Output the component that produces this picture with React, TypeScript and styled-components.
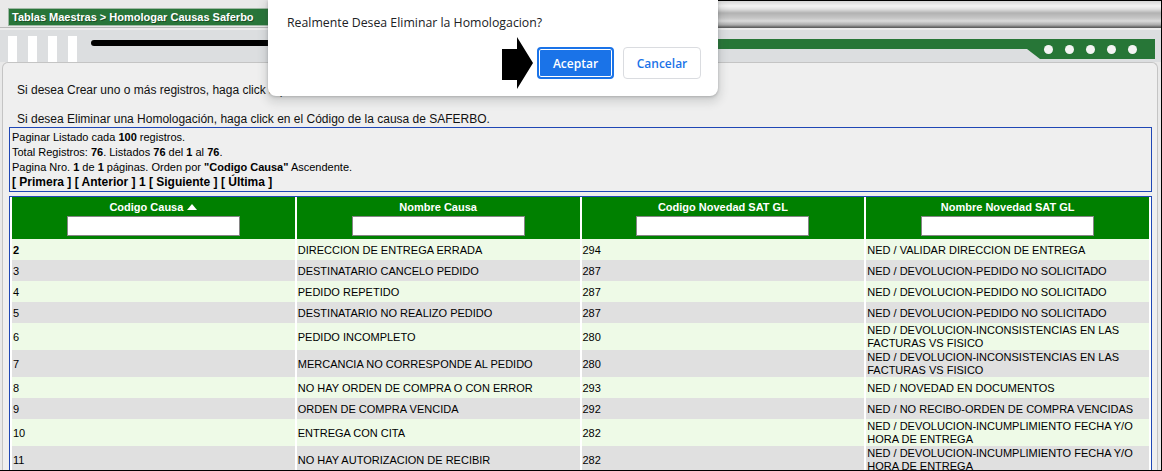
import React from "react";
import styled, { createGlobalStyle } from "styled-components";

const Global = createGlobalStyle`
  html, body { margin: 0; padding: 0; background: #fff; }
  body { font-family: "Liberation Sans", Arial, sans-serif; }
  * { box-sizing: border-box; }
`;

const Frame = styled.div`
  position: relative;
  width: 1162px;
  height: 471px;
  overflow: hidden;
  background: #e9e9e9;
  border-right: 1px solid #000;
  border-bottom: 1px solid #000;
  display: flex;
  flex-direction: column;
`;

const TopRow = styled.div`
  display: flex;
  height: 28px;
  flex: none;
`;

const LeftCap = styled.div`
  width: 268px;
  background: #e9e9e9;
  padding: 8px 0 0 8px;
  border-bottom: 1px solid #b8b8b8;
`;

const Crumb = styled.div`
  height: 18px;
  background: #287539;
  border: 1px solid #9fb8a4;
  border-right: none;
  color: #fff;
  font-weight: bold;
  font-size: 11px;
  line-height: 16px;
  padding-left: 3px;
  text-shadow: 1px 1px 0 rgba(0, 0, 0, 0.35);
  white-space: nowrap;
`;

const Metal = styled.div`
  flex: 1;
  background: linear-gradient(
    to bottom,
    #000 0px,
    #000 1px,
    #d6d6d6 1px,
    #f4f4f4 6px,
    #e2e2e2 9px,
    #b2b2b2 13px,
    #c6c6c6 18px,
    #dadada 21px,
    #a9a9a9 25px,
    #6a6a6a 27px,
    #555 28px
  );
`;

const DecoRow = styled.div`
  display: flex;
  height: 34px;
  flex: none;
  background: #dcdee0;
  border-top: 2px solid #ececec;
  align-items: flex-start;
`;

const Bars = styled.div`
  display: flex;
  gap: 11px;
  padding-left: 8px;
  align-self: stretch;
  align-items: flex-end;
`;

const Bar = styled.div`
  width: 9px;
  height: 26px;
  background: #fff;
`;

const BlackLine = styled.div`
  width: 340px;
  height: 6px;
  margin: 10px 0 0 14px;
  border-radius: 3px;
  background: #000;
`;

const Track = styled.div`
  flex: 1;
  display: flex;
  align-items: flex-start;
  margin: 9px 6px 0 0;
`;

const Band = styled.div`
  flex: 1;
  height: 10px;
  background: #277637;
`;

const Tab = styled.div`
  width: 128px;
  height: 20px;
  background: #277637;
  clip-path: polygon(0 0, 100% 0, 100% 100%, 13px 100%, 0 10px);
  display: flex;
  justify-content: flex-end;
  gap: 12px;
  padding: 6px 18px 0 0;
`;

const Dot = styled.div`
  width: 9px;
  height: 9px;
  border-radius: 50%;
  background: #f4f4f4;
`;

const Panel = styled.div`
  flex: 1;
  margin: 0 3px 0 2px;
  background: #efefef;
  border: 1px solid #c4c4c4;
  border-bottom: none;
  border-radius: 6px 6px 0 0;
  padding: 20px 5px 0 6px;
  display: flex;
  flex-direction: column;
  min-height: 0;
`;

const Intro = styled.p<{ $gap: number }>`
  margin: ${(p) => p.$gap}px 0 0 0;
  padding-left: 8px;
  font-size: 12px;
  line-height: 14px;
  color: #111;
  white-space: nowrap;
`;

const InfoBox = styled.div`
  margin-top: 1px;
  border: 1px solid #1f47b5;
  padding: 2px 2px 1px 2px;
  color: #000;
`;

const InfoLine = styled.div`
  font-size: 11px;
  line-height: 15px;
`;

const Pager = styled.div`
  font-size: 12px;
  line-height: 15px;
  font-weight: bold;
`;

const Grid = styled.table`
  margin-top: 4px;
  width: 100%;
  table-layout: fixed;
  border: 1px solid #1f47b5;
  border-collapse: separate;
  border-spacing: 2px 0;
  background: #fff;
`;

const Th = styled.th`
  background: #008000;
  color: #fff;
  font-weight: bold;
  font-size: 11px;
  line-height: 13px;
  padding: 4px 2px 3px;
  text-align: center;
  vertical-align: top;
`;

const SortUp = styled.span`
  display: inline-block;
  width: 0;
  height: 0;
  margin-left: 4px;
  border-left: 5px solid transparent;
  border-right: 5px solid transparent;
  border-bottom: 6px solid #fff;
  vertical-align: 1px;
`;

const HeadInput = styled.input`
  display: block;
  margin: 2px auto 0;
  width: 173px;
  height: 20px;
  border: 1px solid #858585;
  background: #fff;
  padding: 0;
`;

const Tr = styled.tr<{ $alt: boolean }>`
  height: 21px;
  background: ${(p) => (p.$alt ? "#e0e0e0" : "#eefae7")};
`;

const Td = styled.td<{ $bold?: boolean }>`
  font-size: 11px;
  line-height: 13px;
  padding: 1px 2px 0 1px;
  color: #000;
  vertical-align: middle;
  font-weight: ${(p) => (p.$bold ? "bold" : "normal")};
`;

const Dialog = styled.div`
  position: absolute;
  left: 268px;
  top: 0;
  width: 450px;
  height: 96px;
  background: #fff;
  border-radius: 0 0 8px 8px;
  box-shadow: 0 1px 3px rgba(60, 64, 67, 0.3), 0 4px 8px 3px rgba(60, 64, 67, 0.15);
  padding: 15px 17px 0 19px;
  display: flex;
  flex-direction: column;
  font-family: "Open Sans", "Noto Sans", sans-serif;
`;

const DialogTitle = styled.div`
  font-size: 12.3px;
  line-height: 16px;
  color: #202124;
`;

const Actions = styled.div`
  display: flex;
  justify-content: flex-end;
  align-items: flex-start;
  gap: 9px;
  margin-top: 16px;
`;

const Btn = styled.button<{ $primary?: boolean }>`
  height: 32px;
  width: ${(p) => (p.$primary ? 77 : 78)}px;
  border-radius: 4px;
  font-family: "Open Sans", "Noto Sans", sans-serif;
  font-size: 12px;
  font-weight: 600;
  padding: 0;
  cursor: pointer;
  ${(p) =>
    p.$primary
      ? `background:#1a73e8;color:#fff;border:2px solid #1a73e8;box-shadow: inset 0 0 0 1px #fff;`
      : `background:#fff;color:#1a73e8;border:1px solid #dadce0;`}
`;

const Pointer = styled.svg`
  position: absolute;
  left: 500px;
  top: 35px;
`;

const rows: [string, string, string, string][] = [
  ["2", "DIRECCION DE ENTREGA ERRADA", "294", "NED / VALIDAR DIRECCION DE ENTREGA"],
  ["3", "DESTINATARIO CANCELO PEDIDO", "287", "NED / DEVOLUCION-PEDIDO NO SOLICITADO"],
  ["4", "PEDIDO REPETIDO", "287", "NED / DEVOLUCION-PEDIDO NO SOLICITADO"],
  ["5", "DESTINATARIO NO REALIZO PEDIDO", "287", "NED / DEVOLUCION-PEDIDO NO SOLICITADO"],
  ["6", "PEDIDO INCOMPLETO", "280", "NED / DEVOLUCION-INCONSISTENCIAS EN LAS FACTURAS VS FISICO"],
  ["7", "MERCANCIA NO CORRESPONDE AL PEDIDO", "280", "NED / DEVOLUCION-INCONSISTENCIAS EN LAS FACTURAS VS FISICO"],
  ["8", "NO HAY ORDEN DE COMPRA O CON ERROR", "293", "NED / NOVEDAD EN DOCUMENTOS"],
  ["9", "ORDEN DE COMPRA VENCIDA", "292", "NED / NO RECIBO-ORDEN DE COMPRA VENCIDAS"],
  ["10", "ENTREGA CON CITA", "282", "NED / DEVOLUCION-INCUMPLIMIENTO FECHA Y/O HORA DE ENTREGA"],
  ["11", "NO HAY AUTORIZACION DE RECIBIR", "282", "NED / DEVOLUCION-INCUMPLIMIENTO FECHA Y/O HORA DE ENTREGA"],
];

export default function App() {
  return (
    <>
      <Global />
      <Frame>
        <TopRow>
          <LeftCap>
            <Crumb>Tablas Maestras &gt; Homologar Causas Saferbo</Crumb>
          </LeftCap>
          <Metal />
        </TopRow>
        <DecoRow>
          <Bars>
            <Bar />
            <Bar />
            <Bar />
            <Bar />
          </Bars>
          <BlackLine />
          <Track>
            <Band />
            <Tab>
              <Dot />
              <Dot />
              <Dot />
              <Dot />
              <Dot />
            </Tab>
          </Track>
        </DecoRow>
        <Panel>
          <Intro $gap={0}>Si desea Crear uno o más registros, haga click aquí.</Intro>
          <Intro $gap={15}>
            Si desea Eliminar una Homologación, haga click en el Código de la causa de SAFERBO.
          </Intro>
          <InfoBox>
            <InfoLine>
              Paginar Listado cada <b>100</b> registros.
            </InfoLine>
            <InfoLine>
              Total Registros: <b>76</b>. Listados <b>76</b> del <b>1</b> al <b>76</b>.
            </InfoLine>
            <InfoLine>
              Pagina Nro. <b>1</b> de <b>1</b> páginas. Orden por <b>"Codigo Causa"</b> Ascendente.
            </InfoLine>
            <Pager>[ Primera ] [ Anterior ] 1 [ Siguiente ] [ Última ]</Pager>
          </InfoBox>
          <Grid>
            <thead>
              <tr>
                <Th>
                  Codigo Causa
                  <SortUp />
                  <HeadInput type="text" />
                </Th>
                <Th>
                  Nombre Causa
                  <HeadInput type="text" />
                </Th>
                <Th>
                  Codigo Novedad SAT GL
                  <HeadInput type="text" />
                </Th>
                <Th>
                  Nombre Novedad SAT GL
                  <HeadInput type="text" />
                </Th>
              </tr>
            </thead>
            <tbody>
              {rows.map((r, i) => (
                <Tr key={r[0]} $alt={i % 2 === 1}>
                  <Td $bold={i === 0}>{r[0]}</Td>
                  <Td>{r[1]}</Td>
                  <Td>{r[2]}</Td>
                  <Td>{r[3]}</Td>
                </Tr>
              ))}
            </tbody>
          </Grid>
        </Panel>
        <Dialog>
          <DialogTitle>Realmente Desea Eliminar la Homologacion?</DialogTitle>
          <Actions>
            <Btn $primary>Aceptar</Btn>
            <Btn>Cancelar</Btn>
          </Actions>
        </Dialog>
        <Pointer width="35" height="56" viewBox="0 0 35 56">
          <polygon points="2,14 17,14 17,2 33,28 17,54 17,45 2,45" fill="#000" />
        </Pointer>
      </Frame>
    </>
  );
}
